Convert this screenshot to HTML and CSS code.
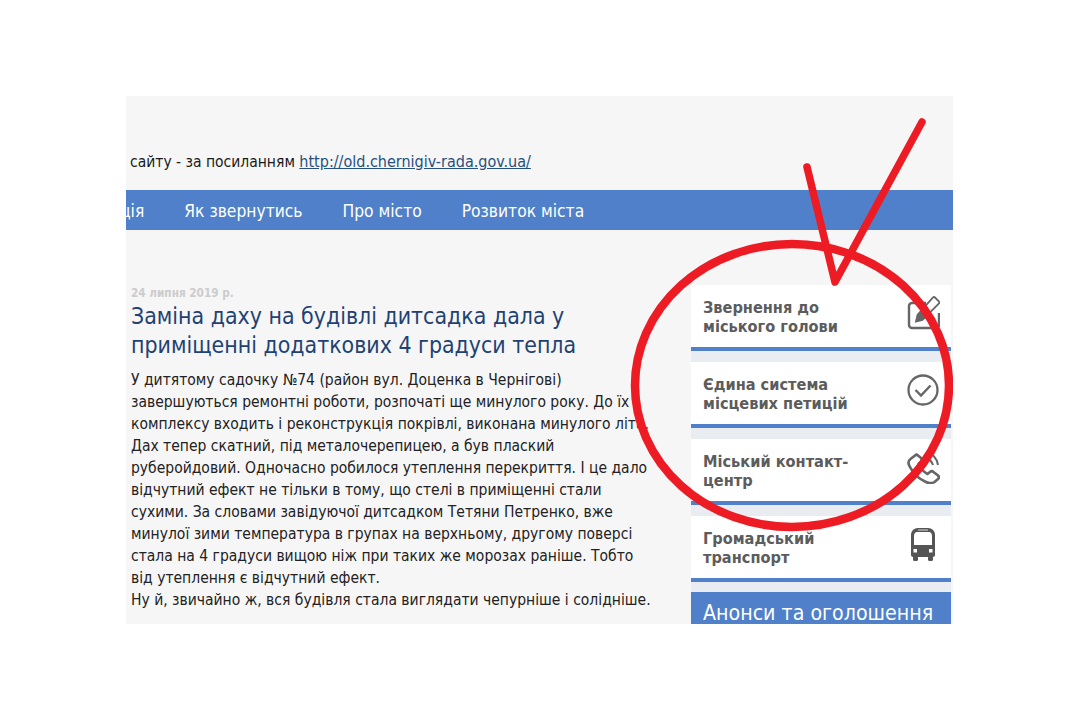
FILE: index.html
```html
<!DOCTYPE html>
<html lang="uk">
<head>
<meta charset="utf-8">
<title>Чернігів</title>
<link rel="stylesheet" href="styles.css">
</head>
<body>
<div class="canvas">
  <p class="notice">сайту - за посиланням <a href="#">http://old.chernigiv-rada.gov.ua/</a></p>
  <nav class="nav">
    <span class="nav-cut">ція</span>
    <span>Як звернутись</span>
    <span>Про місто</span>
    <span>Розвиток міста</span>
  </nav>
  <div class="main">
    <article class="article">
      <div class="date">24 липня 2019 р.</div>
      <h1>Заміна даху на будівлі дитсадка дала у<br>приміщенні додаткових 4 градуси тепла</h1>
      <p class="body">У дитятому садочку №74 (район вул. Доценка в Чернігові)<br>завершуються ремонтні роботи, розпочаті ще минулого року. До їх<br>комплексу входить і реконструкція покрівлі, виконана минулого літа.<br>Дах тепер скатний, під металочерепицею, а був плаский<br>руберойдовий. Одночасно робилося утеплення перекриття. І це дало<br>відчутний ефект не тільки в тому, що стелі в приміщенні стали<br>сухими. За словами завідуючої дитсадком Тетяни Петренко, вже<br>минулої зими температура в групах на верхньому, другому поверсі<br>стала на 4 градуси вищою ніж при таких же морозах раніше. Тобто<br>від утеплення є відчутний ефект.<br>Ну й, звичайно ж, вся будівля стала виглядати чепурніше і солідніше.</p>
    </article>
    <aside class="side">
      <a class="card"><span class="label">Звернення до<br>міського голови</span>
        <svg class="ico" viewBox="0 0 34 34"><path d="M20 7H6a3 3 0 0 0-3 3v19a3 3 0 0 0 3 3h24a3 3 0 0 0 3-3V17" fill="none" stroke="#666" stroke-width="2.4"/><path d="M29 1.500l4 4a1.500 1.500 0 0 1 0 2L16.500 24l-6.500 1.500 1.500-6.500L27 1.500a1.500 1.500 0 0 1 2 0z" fill="#fff" stroke="#666" stroke-width="1.800"/><path d="M10.500 25l1.500-6.500 5.500-5.500 5 5-5.500 5.500z" fill="#666"/></svg></a>
      <a class="card"><span class="label">Єдина система<br>місцевих петицій</span>
        <svg class="ico" viewBox="0 0 34 34"><circle cx="17" cy="17" r="14.500" fill="none" stroke="#666" stroke-width="2.300"/><path d="M9.500 17l5.500 5.500 9.500-10" fill="none" stroke="#666" stroke-width="2.400"/></svg></a>
      <a class="card"><span class="label">Міський контакт-<br>центр</span>
        <svg class="ico" viewBox="0 0 34 34"><path d="M9 5.500L4.500 9C2 11 2 14 4 17c3 6 9 12 16 15 3 1.500 6 1.500 8.500 0l3.500-3c1-1 1-2.500 0-3.500l-4.500-3.500c-1-1-2.500-1-3.500 0l-2.500 2c-4-2-7-6-9-10l2.500-2.500c1-1 1-2.500 0-3.500L12 5.500c-1-1-2-1-3 0z" fill="none" stroke="#666" stroke-width="2.600" stroke-linejoin="round"/><path d="M20 2c6 1 11 6 12 13M20 8c3 1 6 4 7 7" fill="none" stroke="#666" stroke-width="2"/></svg></a>
      <a class="card"><span class="label">Громадський<br>транспорт</span>
        <svg class="ico" viewBox="0 0 34 34"><path d="M5 8c0-4 3-7 7-7h10c4 0 7 3 7 7v20c0 1-1 2-2 2H7c-1 0-2-1-2-2z" fill="#555"/><path d="M8 9c0-2 1-4 3-4h12c2 0 3 2 3 4v9H8z" fill="#fff"/><path d="M12 3h10" stroke="#ddd" stroke-width="1"/><rect x="7" y="29" width="5" height="5" rx="1.500" fill="#555"/><rect x="22" y="29" width="5" height="5" rx="1.500" fill="#555"/><rect x="7.500" y="22" width="3.500" height="3.500" fill="#fff"/><rect x="23" y="22" width="3.500" height="3.500" fill="#fff"/></svg></a>
      <div class="anons">Анонси та оголошення</div>
    </aside>
  </div>
  <svg class="mark" viewBox="0 0 827 528" width="827" height="528">
    <path d="M681 71L709 186L796 26" fill="none" stroke="#ed1c24" stroke-width="7.500" stroke-linecap="round" stroke-linejoin="round"/>
    <ellipse cx="666" cy="289.500" rx="157" ry="141.500" fill="none" stroke="#ed1c24" stroke-width="8.500"/>
  </svg>
</div>
</body>
</html>
```
FILE: styles.css
```css
html, body { margin: 0; padding: 0; background: #fff; }
body { padding: 96px 0 0 126px; height: 624px; box-sizing: border-box; }
.canvas {
  position: relative;
  width: 827px;
  height: 528px;
  background: #f6f6f7;
  overflow: hidden;
  font-family: "DejaVu Sans Condensed", "DejaVu Sans", sans-serif;
  color: #1a1a1a;
}
.notice { margin: 0; padding: 55px 0 0 4px; height: 39px; font-size: 15.5px; line-height: 22px; white-space: nowrap; }
.notice a { color: #26507f; text-decoration: underline; font-size: 16px; }
.nav {
  height: 38px;
  padding-top: 2px;
  background: #4f80c9;
  display: flex;
  align-items: center;
  gap: 40px;
  color: #fff;
  font-size: 17.3px;
  white-space: nowrap;
}
.nav-cut { margin-left: -6px; }
.main { display: flex; padding-top: 55px; }
.article { width: 565px; flex: none; padding-left: 5px; box-sizing: border-box; padding-top: 1px; }
.date { font-size: 11.7px; font-weight: bold; color: #ccc; line-height: 14px; }
h1 { margin: 2px 0 0; font-size: 22.9px; line-height: 29px; font-weight: normal; color: #1f4273; white-space: nowrap; }
.body { margin: 9px 0 0; font-size: 15.5px; line-height: 22px; white-space: nowrap; color: #222; }
.side { width: 260px; flex: none; display: flex; flex-direction: column; gap: 11px; background: #e9edf1; }
.card {
  flex: none;
  height: 62px;
  border-bottom: 4px solid #4f80c9;
  background: #fff;
  padding: 0 12px;
  display: flex;
  align-items: center;
  justify-content: space-between;
  font-size: 16.2px;
  line-height: 19px;
  font-weight: bold;
  color: #5c5c5c;
  white-space: nowrap;
}
.label { margin-top: 2px; }
.ico { width: 34px; height: 34px; flex: none; margin: 0 -1px 6px 0; }
.anons { flex: none; background: #4f80c9; color: #fff; font-size: 21.2px; padding: 8px 12px 0; margin-top: -1px; height: 40px; white-space: nowrap; }
.mark { position: absolute; left: 0; top: 0; pointer-events: none; }
```
